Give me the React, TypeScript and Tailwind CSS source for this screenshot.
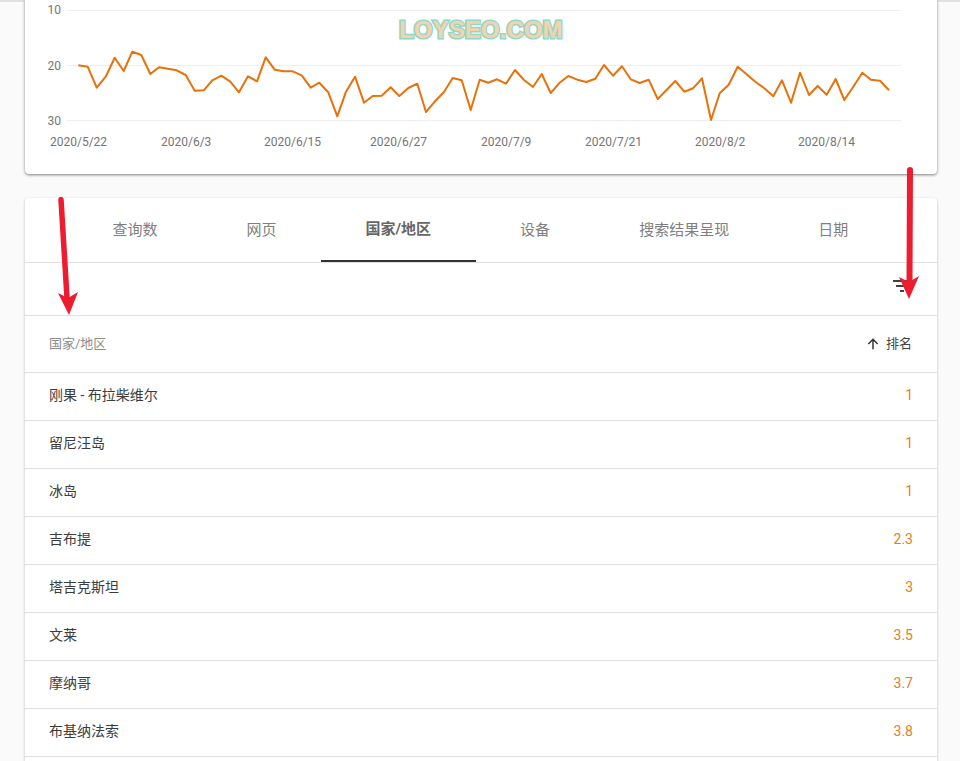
const cjk = "font-['Roboto','Noto_Sans_CJK_SC',sans-serif]";

// traced from the reference, at 3x
const line = [
  [235, 196], [263, 200], [290, 263], [317, 230], [344, 173], [371, 213], [397, 155], [424, 165], [451, 222], [477, 202],
  [504, 206], [530, 211], [557, 225], [584, 272], [611, 271], [637, 241], [664, 227], [691, 245], [717, 277], [744, 229],
  [771, 244], [797, 172], [824, 209], [851, 214], [878, 214], [905, 226], [932, 263], [958, 248], [985, 277], [1012, 349],
  [1038, 275], [1065, 230], [1092, 308], [1118, 288], [1145, 287], [1172, 262], [1198, 288], [1225, 264], [1252, 251], [1278, 336],
  [1305, 304], [1332, 276], [1358, 234], [1385, 241], [1412, 330], [1439, 239], [1465, 248], [1491, 238], [1518, 251], [1545, 210],
  [1572, 240], [1599, 261], [1625, 222], [1652, 279], [1679, 248], [1705, 228], [1732, 239], [1759, 246], [1786, 236], [1812, 195],
  [1839, 227], [1866, 199], [1892, 238], [1919, 249], [1946, 239], [1973, 297], [1999, 271], [2026, 243], [2053, 275], [2079, 265],
  [2106, 235], [2133, 360], [2159, 280], [2186, 254], [2213, 200], [2239, 222], [2266, 245], [2293, 265], [2320, 289], [2346, 241],
  [2373, 308], [2400, 218], [2427, 285], [2453, 258], [2480, 284], [2507, 237], [2533, 300], [2560, 260], [2587, 218], [2613, 239],
  [2640, 242], [2667, 271],
];

const points = line.map(([x, y]) => `${(x / 3 - 25).toFixed(1)},${(y / 3).toFixed(1)}`).join(" ");

const yLabels = [
  { y: 10, top: 2, label: "10" },
  { y: 65, top: 58, label: "20" },
  { y: 120, top: 113, label: "30" },
];

const xLabels = [
  { label: "2020/5/22", w: "w-[111px]" },
  { label: "2020/6/3", w: "w-[103px]" },
  { label: "2020/6/15", w: "w-[106px]" },
  { label: "2020/6/27", w: "w-[111px]" },
  { label: "2020/7/9", w: "w-[104px]" },
  { label: "2020/7/21", w: "w-[110px]" },
  { label: "2020/8/2", w: "w-[103px]" },
  { label: "2020/8/14", w: "w-auto" },
];

const tabs = ["查询数", "网页", "国家/地区", "设备", "搜索结果呈现", "日期"];

const rows = [
  ["刚果 - 布拉柴维尔", "1"],
  ["留尼汪岛", "1"],
  ["冰岛", "1"],
  ["吉布提", "2.3"],
  ["塔吉克斯坦", "3"],
  ["文莱", "3.5"],
  ["摩纳哥", "3.7"],
  ["布基纳法索", "3.8"],
  ["", ""],
];

function Chart() {
  return (
    <div className="relative h-[174px] rounded-b bg-white shadow-[0_1px_3px_rgba(0,0,0,0.5)]">
      <svg width="912" height="134" viewBox="0 0 912 134" className="block">
        {yLabels.map((t) => (
          <line key={t.y} x1="42" x2="876" y1={t.y + 0.5} y2={t.y + 0.5} stroke="#eeeeee" />
        ))}
        <polyline points={points} fill="none" stroke="#e8710a" strokeWidth="2" strokeLinejoin="round" />
      </svg>
      {yLabels.map((t) => (
        <div key={t.y} className="absolute left-[22px] w-[14px] text-right text-xs leading-4 text-[#757575]" style={{ top: t.top }}>
          {t.label}
        </div>
      ))}
      <div className={`flex pl-[25px] text-xs leading-4 text-[#757575] ${cjk}`}>
        {xLabels.map((t) => (
          <div key={t.label} className={`shrink-0 ${t.w}`}>
            {t.label}
          </div>
        ))}
      </div>
    </div>
  );
}

function Tabs() {
  return (
    <div className="flex h-[65px] border-b border-[#e0e0e0] pl-[43px]">
      {tabs.map((t) => {
        const active = t === "国家/地区";
        return (
          <div
            key={t}
            className={
              active
                ? "flex h-[64px] items-center border-b-2 border-[#333333] px-[44.5px] text-[15px] font-bold text-[#666666]"
                : "flex h-[64px] items-center px-[44.5px] text-[15px] text-[#808080]"
            }
          >
            {t}
          </div>
        );
      })}
    </div>
  );
}

function FilterIcon() {
  return (
    <svg width="24" height="24" viewBox="0 0 24 24" fill="#424242" className="mb-1.5">
      <path d="M3 6h18v2H3zM6 11h12v2H6zM10 16h4v2h-4z" />
    </svg>
  );
}

function Arrows() {
  return (
    <>
      <svg className="absolute left-[50px] top-[192px] z-20" width="34" height="128" viewBox="0 0 34 128">
        <path d="M11 7.5 L17 106" stroke="#ed1c2e" strokeWidth="5.5" strokeLinecap="round" fill="none" />
        <path d="M8 101 L18 106 L28 100 L19 123 Z" fill="#ed1c2e" />
      </svg>
      <svg className="absolute left-[895px] top-[160px] z-20" width="32" height="144" viewBox="0 0 32 144">
        <path d="M15 10 L14.5 122" stroke="#ed1c2e" strokeWidth="6" strokeLinecap="round" fill="none" />
        <path d="M4 117 L14 122 L24 116 L14 139 Z" fill="#ed1c2e" />
      </svg>
    </>
  );
}

export default function App() {
  return (
    <div className={`relative h-[761px] overflow-hidden bg-[#fafafa] ${cjk}`}>
      <div className="h-0.5 bg-[#e0e0e0]" />
      <div className="-mt-0.5 pr-[23px] pl-[25px]">
        <Chart />
        <div className="mt-6 rounded bg-white shadow-[0_1px_3px_rgba(0,0,0,0.25)]">
          <Tabs />
          <div className="flex h-[53px] items-center justify-end border-b border-[#e0e0e0] pr-[23px]">
            <FilterIcon />
          </div>
          <div className="flex h-[57px] items-center justify-between border-b border-[#e0e0e0] pr-[25px] pl-6 text-[13px] text-[#8c8c8c]">
            <span>国家/地区</span>
            <span className="flex items-center gap-[5px] text-[#444444]">
              <svg width="16" height="16" viewBox="0 0 24 24" fill="none" stroke="#333333" strokeWidth="2.2">
                <path d="M12 20V5M5 12l7-7 7 7" />
              </svg>
              排名
            </span>
          </div>
          {rows.map(([name, value], i) => (
            <div key={i} className="flex h-12 items-center justify-between border-b border-[#e0e0e0] px-6 pb-1 text-sm text-[#3c3c3c]">
              <span>{name}</span>
              <span className="text-[#e67e22]">{value}</span>
            </div>
          ))}
        </div>
      </div>
      <div className="absolute left-[399px] top-[15px] z-20 font-['Liberation_Sans',sans-serif] text-2xl leading-[30px] font-bold tracking-[0.1px] text-[#f6d2ac] [-webkit-text-stroke:3px_#8ed8c8] [paint-order:stroke_fill]">
        LOYSEO.COM
      </div>
      <Arrows />
    </div>
  );
}
